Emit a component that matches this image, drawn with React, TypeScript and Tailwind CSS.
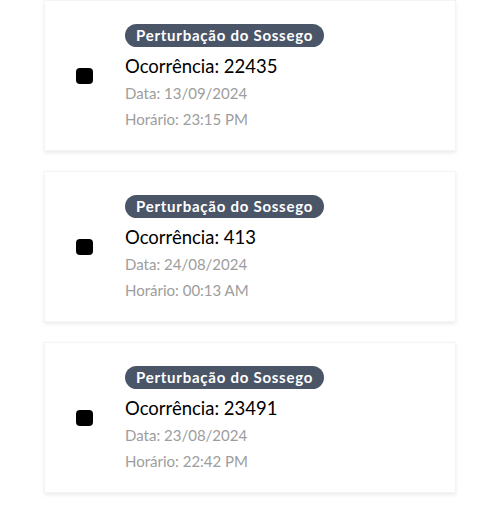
const items = [
  { id: "22435", data: "13/09/2024", hora: "23:15 PM" },
  { id: "413", data: "24/08/2024", hora: "00:13 AM" },
  { id: "23491", data: "23/08/2024", hora: "22:42 PM" },
];

export default function App() {
  return (
    <main className="min-h-screen bg-white font-['Lato','Open_Sans',sans-serif]">
      <div className="flex flex-col gap-5 pl-[44px] pr-[45px]">
        {items.map((item) => (
          <div
            key={item.id}
            className="flex h-[151px] items-center gap-8 border border-gray-100 bg-white pl-[31px] shadow-[0_2px_4px_rgba(0,0,0,0.08)]"
          >
            <div className="h-4 w-[17px] rounded-[4px] bg-black blur-[0.5px]" />
            <div className="flex flex-col self-start pt-[23px]">
              <span className="w-fit rounded-full bg-[#4a5568] px-[11px] py-[2px] text-[15px] leading-[19px] font-bold tracking-[0.05em] text-white">
                Perturbação do Sossego
              </span>
              <span className="mt-[6px] text-[18.5px] leading-[27px] text-black">
                Ocorrência: {item.id}
              </span>
              <span className="text-[15px] leading-[26px] text-[#9d9d9d]">
                Data: {item.data}
              </span>
              <span className="text-[15px] leading-[26px] text-[#9d9d9d]">
                Horário: {item.hora}
              </span>
            </div>
          </div>
        ))}
      </div>
    </main>
  );
}
